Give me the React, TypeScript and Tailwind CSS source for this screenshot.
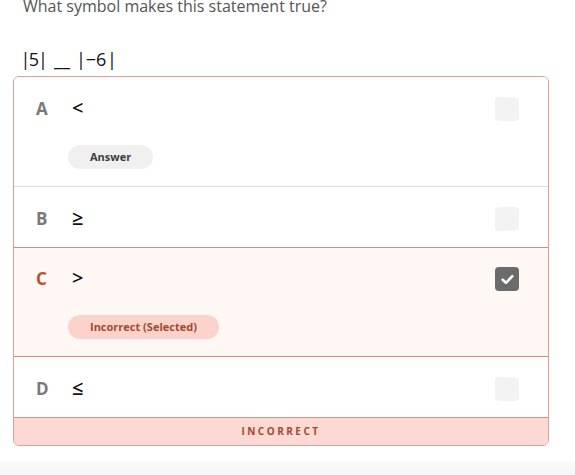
import React from "react";

const font = { fontFamily: '"Open Sans", "Liberation Sans", sans-serif' };

function Box({ checked }: { checked?: boolean }) {
  if (checked)
    return (
      <div className="w-6 h-6 rounded-[4px] bg-[#6b6b6b] flex items-center justify-center">
        <svg width="15" height="15" viewBox="0 0 14 14">
          <path d="M2.5 7.2 L5.6 10.2 L11.5 3.8" fill="none" stroke="#fff" strokeWidth="2.4" strokeLinecap="round" strokeLinejoin="round" />
        </svg>
      </div>
    );
  return <div className="w-6 h-6 rounded-[4px] bg-[#f3f3f3]" />;
}

function Row({
  letter,
  symbol,
  pill,
  selected,
  divider,
  pb,
}: {
  letter: string;
  symbol: string;
  pill?: React.ReactNode;
  selected?: boolean;
  divider?: boolean;
  pb: string;
}) {
  return (
    <div
      className={
        (selected
          ? "bg-[#fff7f4] border-y border-[#cf8d7e] pt-[19px] "
          : "bg-white pt-5 " + (divider ? "border-b border-[#dcdcdc] " : "")) +
        "pl-[22px] pr-[29px] " +
        pb
      }
    >
      <div className="flex items-center h-6">
        <div className={"w-[33px] text-[17px] leading-6 font-bold " + (selected ? "text-[#b5532f]" : "text-[#7a7a7a]")}>{letter}</div>
        <div className="flex-1 text-[20px] font-semibold text-[#111] pl-[3px] leading-6 -mt-[3px]">{symbol}</div>
        <Box checked={selected} />
      </div>
      {pill ? <div className="mt-6 pl-[32px] flex">{pill}</div> : null}
    </div>
  );
}

export default function App() {
  return (
    <div className="w-[575px] h-[475px] bg-white overflow-hidden" style={font}>
      <div className="px-[23px]">
        <div className="text-[16px] text-[#555] leading-[22px] -mt-[5px]">What symbol makes this statement true?</div>
        <div className="mt-[30px] text-[18px] text-[#111] leading-6 flex items-center whitespace-nowrap">
          <span className="inline-flex justify-center w-[5px]">|</span>
          <span className="inline-flex justify-center w-[12px]">5</span>
          <span className="inline-flex justify-center w-[6px]">|</span>
          <span className="inline-block w-[6px]" />
          <span className="inline-flex justify-center w-[20px]">__</span>
          <span className="inline-block w-[6px]" />
          <span className="inline-flex justify-center w-[6px]">|</span>
          <span className="inline-flex justify-center w-[24px]">−6</span>
          <span className="inline-flex justify-center w-[8px]">|</span>
        </div>
      </div>
      <div className="mx-[13px] mt-[5px] w-[536px] border border-[#dc9f93] rounded-[6px] overflow-hidden">
        <Row
          letter="A"
          symbol="<"
          divider
          pb="pb-[17px]"
          pill={
            <span className="h-6 px-[22px] rounded-full bg-[#f0f0f0] text-[11px] font-bold text-[#3d3d3d] flex items-center">Answer</span>
          }
        />
        <Row letter="B" symbol="≥" pb="pb-4" />
        <Row
          letter="C"
          symbol=">"
          selected
          pb="pb-[17px]"
          pill={
            <span className="h-6 px-[22px] rounded-full bg-[#fbd3cb] text-[11px] font-bold text-[#a14a33] flex items-center">
              Incorrect (Selected)
            </span>
          }
        />
        <Row letter="D" symbol="≤" pb="pb-4" />
        <div className="h-[28px] bg-[#fdd9d3] border-t border-[#d49484] flex items-center justify-center text-[10px] font-bold tracking-[2.5px] text-[#a5482f]">
          INCORRECT
        </div>
      </div>
      <div className="mt-[15px] h-[20px] bg-gradient-to-b from-[#fbfbfb] to-[#f4f4f4]" />
    </div>
  );
}
